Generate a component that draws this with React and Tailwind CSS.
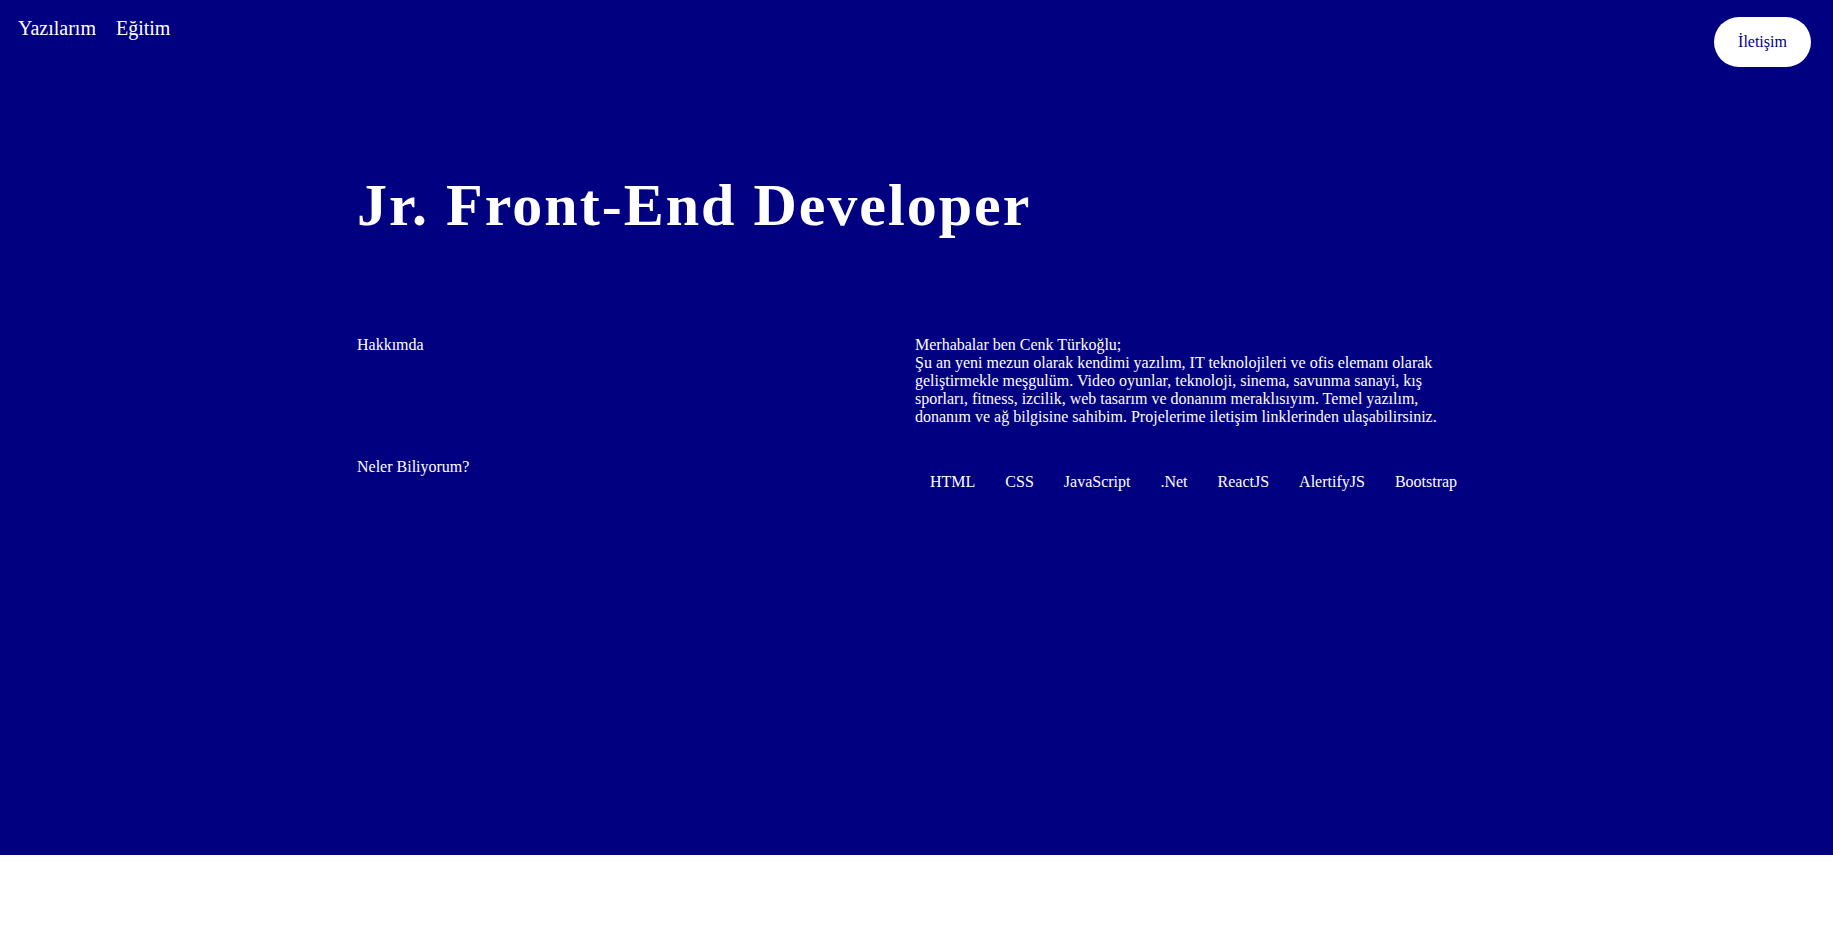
const teknolojiler = ['HTML', 'CSS', 'JavaScript', '.Net', 'ReactJS', 'AlertifyJS', 'Bootstrap'];

export default function App() {
  return (
    <div className="min-h-[940px] bg-white font-['Liberation_Serif','Times_New_Roman',serif] leading-[normal]">
      <div className="h-[855px] bg-[#000080] text-white">
        {/* Üst menü */}
        <header className="flex justify-between items-start h-[67px]">
          <nav className="flex gap-[20px] pl-[18px] pt-[17px] text-[20px]">
            <a href="#">Yazılarım</a>
            <a href="#">Eğitim</a>
          </nav>
          <button className="mt-[17px] mr-[22px] w-[97px] h-[50px] rounded-full bg-white text-[#000080] text-[16px]">
            İletişim
          </button>
        </header>

        <div className="w-[1119px] mx-auto">
          <h1 className="mt-[104px] text-[60px] font-bold tracking-[2px]">Jr. Front-End Developer</h1>

          <div className="grid grid-cols-[558px_540px] mt-[96px] text-[16px]">
            {/* Hakkımda */}
            <h3>Hakkımda</h3>
            <p>
              Merhabalar ben Cenk Türkoğlu;<br />
              Şu an yeni mezun olarak kendimi yazılım, IT teknolojileri ve ofis elemanı olarak geliştirmekle meşgulüm. Video oyunlar, teknoloji, sinema, savunma sanayi, kış sporları, fitness, izcilik, web tasarım ve donanım meraklısıyım. Temel yazılım, donanım ve ağ bilgisine sahibim. Projelerime iletişim linklerinden ulaşabilirsiniz.
            </p>

            {/* Neler Biliyorum */}
            <h3 className="mt-[32px]">Neler Biliyorum?</h3>
            <ul className="flex mt-[47px]">
              {teknolojiler.map((t) => (
                <li key={t} className="px-[15px]">{t}</li>
              ))}
            </ul>
          </div>
        </div>
      </div>
    </div>
  );
}
